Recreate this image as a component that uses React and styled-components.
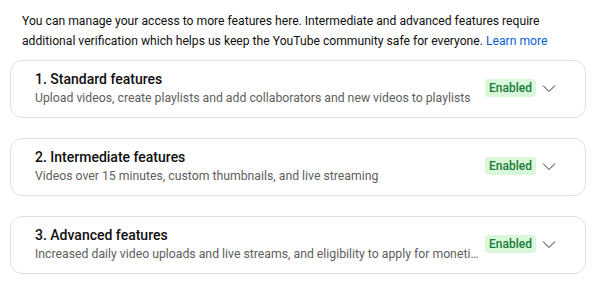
import React from "react";
import styled, { createGlobalStyle } from "styled-components";

const GlobalStyle = createGlobalStyle`
  body {
    margin: 0;
    background: #ffffff;
    font-family: Roboto, "Noto Sans", Arial, sans-serif;
  }
`;

const Page = styled.div`
  width: 576px;
  padding: 11px 0 0 10px;
`;

const Intro = styled.p`
  margin: 0 0 9px 12px;
  font-size: 12.15px;
  line-height: 20px;
  color: #0f0f0f;
  white-space: nowrap;
`;

const Link = styled.a`
  color: #065fd4;
  text-decoration: none;
`;

const List = styled.div`
  display: flex;
  flex-direction: column;
  gap: 20px;
`;

const Card = styled.div`
  display: flex;
  align-items: center;
  border: 1px solid #e0e0e0;
  border-radius: 12px;
  padding: 8px 24px 10px 24px;
`;

const Text = styled.div`
  flex: 1;
  min-width: 0;
  margin-right: 2px;
`;

const Title = styled.div`
  font-size: 14px;
  line-height: 20px;
  font-weight: 500;
  color: #0f0f0f;
`;

const Desc = styled.div`
  font-size: 12.25px;
  line-height: 18px;
  color: #606060;
  white-space: nowrap;
  overflow: hidden;
  text-overflow: ellipsis;
`;

const Badge = styled.span`
  flex: none;
  background: #d9f8da;
  color: #1a7a3a;
  font-size: 12px;
  font-weight: 500;
  line-height: 18px;
  padding: 0 4px;
  border-radius: 4px;
`;

const Chevron = styled.svg`
  flex: none;
  width: 24px;
  height: 24px;
  margin-left: 1px;
`;

const features = [
  {
    title: "1. Standard features",
    desc: "Upload videos, create playlists and add collaborators and new videos to playlists",
  },
  {
    title: "2. Intermediate features",
    desc: "Videos over 15 minutes, custom thumbnails, and live streaming",
  },
  {
    title: "3. Advanced features",
    desc: "Increased daily video uploads and live streams, and eligibility to apply for monetization",
  },
];

const App = () => {
  return (
    <Page>
      <GlobalStyle />
      <Intro>
        You can manage your access to more features here. Intermediate and advanced features require
        <br />
        additional verification which helps us keep the YouTube community safe for everyone.{" "}
        <Link href="#">Learn more</Link>
      </Intro>
      <List>
        {features.map((f) => (
          <Card key={f.title}>
            <Text>
              <Title>{f.title}</Title>
              <Desc>{f.desc}</Desc>
            </Text>
            <Badge>Enabled</Badge>
            <Chevron viewBox="0 0 24 24">
              <polyline points="6,9.5 12,15.5 18,9.5" fill="none" stroke="#303030" strokeWidth="1" />
            </Chevron>
          </Card>
        ))}
      </List>
    </Page>
  );
};

export default App;
